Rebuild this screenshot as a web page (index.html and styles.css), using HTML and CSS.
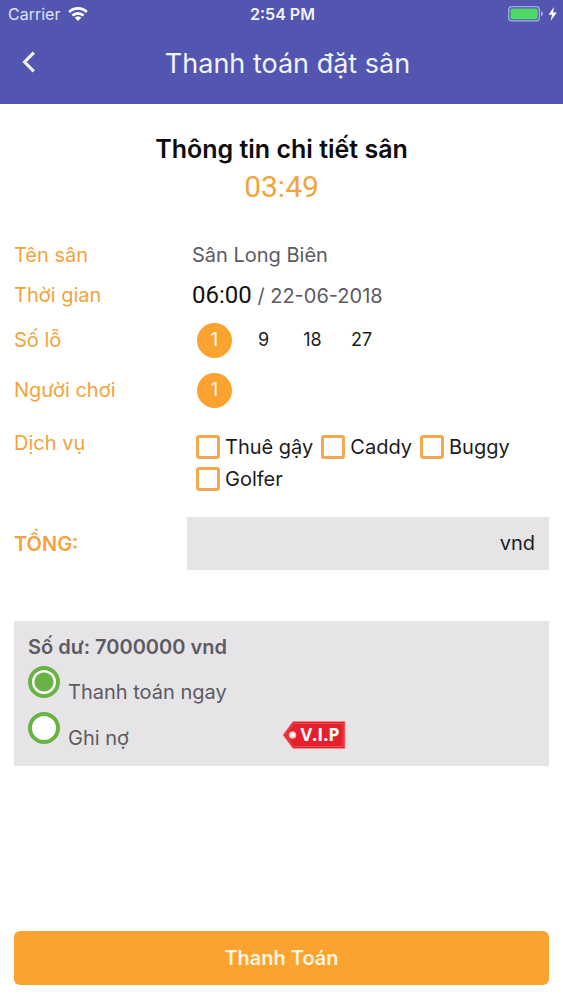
FILE: index.html
```html
<!DOCTYPE html>
<html lang="vi">
<head>
<meta charset="utf-8">
<meta name="viewport" content="width=device-width, initial-scale=1">
<title>Thanh toán đặt sân</title>
<link rel="stylesheet" href="styles.css">
</head>
<body>
<header class="topbar">
  <div class="status">
    <div class="status-left">
      <span>Carrier</span>
      <svg class="wifi" viewBox="0 0 20 14" aria-hidden="true">
        <g fill="none" stroke="currentColor" stroke-width="2.8">
          <path d="M1.2 5A12.6 12.6 0 0 1 18.8 5"/>
          <path d="M4.5 8.6A7.9 7.9 0 0 1 15.5 8.6"/>
        </g>
        <path d="M6.7 10.8A4.8 4.8 0 0 1 13.3 10.8L10 14Z" fill="currentColor"/>
      </svg>
    </div>
    <time class="status-time">2:54 PM</time>
    <div class="status-right">
      <svg class="battery" viewBox="0 0 36 16" aria-hidden="true">
        <rect x="0.7" y="0.7" width="30.6" height="14.2" rx="3" fill="none" stroke="#a9ace4" stroke-width="1.3"/>
        <rect x="2.4" y="2.4" width="27.2" height="10.8" rx="1.6" fill="#4cd964"/>
        <path d="M33 5.2Q35 6 35 7.8T33 10.4Z" fill="#a9ace4"/>
      </svg>
      <svg class="bolt" viewBox="0 0 9 14" aria-hidden="true">
        <path d="M5.8 0L0.6 7.8H4L2.6 14L8.8 5.6H5.2Z" fill="currentColor"/>
      </svg>
    </div>
  </div>
  <div class="nav">
    <button class="back" type="button" aria-label="Quay lại">
      <svg viewBox="0 0 14 22" aria-hidden="true"><path d="M11.8 1.6L2.6 11L11.8 20.4" fill="none" stroke="currentColor" stroke-width="3.2"/></svg>
    </button>
    <h1 class="nav-title">Thanh toán đặt sân</h1>
  </div>
</header>

<main class="content">
  <h2 class="heading">Thông tin chi tiết sân</h2>
  <time class="countdown">03:49</time>

  <dl class="details">
    <div class="row">
      <dt class="label">Tên sân</dt>
      <dd class="value">Sân Long Biên</dd>
    </div>
    <div class="row">
      <dt class="label">Thời gian</dt>
      <dd class="value"><time class="clock">06:00</time> / 22-06-2018</dd>
    </div>
    <div class="row row-choice">
      <dt class="label">Số lỗ</dt>
      <dd class="value choices">
        <button class="choice choice-on" type="button">1</button>
        <button class="choice" type="button">9</button>
        <button class="choice" type="button">18</button>
        <button class="choice" type="button">27</button>
      </dd>
    </div>
    <div class="row row-choice">
      <dt class="label">Người chơi</dt>
      <dd class="value choices">
        <button class="choice choice-on" type="button">1</button>
      </dd>
    </div>
    <div class="row row-services">
      <dt class="label">Dịch vụ</dt>
      <dd class="value services">
        <label class="service"><input class="check" type="checkbox">Thuê gậy</label>
        <label class="service"><input class="check" type="checkbox">Caddy</label>
        <label class="service"><input class="check" type="checkbox">Buggy</label>
        <label class="service"><input class="check" type="checkbox">Golfer</label>
      </dd>
    </div>
  </dl>

  <div class="total">
    <span class="label total-label">TỔNG:</span>
    <output class="total-box">vnd</output>
  </div>

  <section class="balance">
    <h3 class="balance-title">Số dư: 7000000 vnd</h3>
    <label class="pay"><input class="radio" type="radio" name="pay" checked><span class="pay-text">Thanh toán ngay</span></label>
    <div class="pay-line">
      <label class="pay"><input class="radio" type="radio" name="pay"><span class="pay-text">Ghi nợ</span></label>
      <svg class="vip" viewBox="0 0 64 30" role="img" aria-label="V.I.P">
        <path d="M1 15L11 1.5H63V28.5H11Z" fill="#e5202b" stroke="#f08a8f" stroke-width="1"/>
        <path d="M3.5 15L12 3.5H61V26.5H12Z" fill="none" stroke="#ee5960" stroke-width="0.8"/>
        <circle cx="10.5" cy="15" r="3.8" fill="#f8b5b6"/>
        <circle cx="10.5" cy="15" r="2.4" fill="#fff"/>
        <text class="vip-text" x="38" y="21" text-anchor="middle">V.I.P</text>
      </svg>
    </div>
  </section>

  <button class="submit" type="button">Thanh Toán</button>
</main>
</body>
</html>
```

FILE: styles.css
```css
* { box-sizing: border-box; }

body {
  margin: 0;
  min-height: 100vh;
  display: flex;
  flex-direction: column;
  background: #fff;
  color: #5c5b61;
  font-family: Inter, "Noto Sans", sans-serif;
  font-size: 20px;
  line-height: 24px;
}

h1, h2, h3, dl, dd { margin: 0; }
button, input { margin: 0; font: inherit; }
button { border: 0; padding: 0; background: none; color: inherit; }

.topbar {
  background: #5256b1;
  color: #f1f2ff;
}

.status {
  display: grid;
  grid-template-columns: 1fr auto 1fr;
  align-items: center;
  min-height: 28px;
  padding: 0 6px 0 8px;
  font-size: 16px;
}
.status-left { display: flex; align-items: center; gap: 8px; color: #dfe1fb; }
.wifi { width: 20px; height: 14px; color: #fff; }
.status-time { font-weight: 600; }
.status-right { display: flex; align-items: center; justify-content: flex-end; gap: 4px; color: #fff; }
.battery { width: 36px; height: 16px; }
.bolt { width: 9px; height: 14px; }

.nav {
  display: grid;
  grid-template-columns: 58px 1fr 46px;
  align-items: center;
  min-height: 76px;
  padding-bottom: 4px;
}
.back { justify-self: center; display: flex; padding: 0 0 4px; }
.back svg { width: 14px; height: 22px; }
.nav-title {
  text-align: center;
  font-size: 27px;
  font-weight: 400;
  line-height: 32px;
}

.content {
  flex: 1;
  display: flex;
  flex-direction: column;
  padding: 29px 14px 15px;
}
.heading {
  color: #0c0c0e;
  text-align: center;
  font-size: 25px;
  font-weight: 600;
  line-height: 32px;
}
.countdown {
  margin-top: 6px;
  text-align: center;
  color: #f3a33c;
  font-family: Roboto, sans-serif;
  font-size: 30px;
  font-weight: 400;
  line-height: 32px;
}

.details { margin-top: 32px; }
.row, .total {
  display: grid;
  grid-template-columns: 173px 1fr;
  align-items: center;
  min-height: 40px;
}
.label { color: #f3a33c; }
.value { padding-left: 5px; }
.clock {
  color: #111;
  font-family: Roboto, sans-serif;
  font-size: 24px;
}

.row-choice { min-height: 50px; }
.choices { display: flex; gap: 14px; padding-left: 10px; }
.choice {
  width: 35px;
  height: 35px;
  border-radius: 50%;
  color: #1c1c1e;
  font-size: 18px;
}
.choice-on { background: #faa330; color: #fff; }

.row-services { align-items: start; padding-top: 16px; }
.services {
  display: flex;
  flex-wrap: wrap;
  gap: 8px;
  padding: 4px 0 0 9px;
}
.service { display: flex; align-items: center; gap: 5px; color: #1c1c1e; }
.check {
  appearance: none;
  width: 24px;
  height: 24px;
  border: 3px solid #f1a94f;
  border-radius: 3px;
  background: #fff;
}

.total { margin-top: 26px; }
.total-label { font-weight: 600; }
.total-box {
  padding: 14px;
  background: #e6e4e7;
  color: #1c1c1e;
  text-align: right;
  line-height: 25px;
}

.balance {
  margin-top: 51px;
  padding: 14px 14px 16px;
  background: #e6e4e7;
}
.balance-title { margin-bottom: 7px; font-size: 20px; font-weight: 600; }
.pay { display: flex; gap: 8px; }
.pay-text { padding-top: 14px; }
.radio {
  appearance: none;
  flex: none;
  width: 32px;
  height: 32px;
  border: 4px solid #69b245;
  border-radius: 50%;
  background: #fff;
}
.radio:checked { background: radial-gradient(circle, #69b245 9px, #fff 10px); }
.pay-line {
  display: grid;
  grid-template-columns: 1fr 1fr;
  align-items: end;
  margin-top: 8px;
}
.vip { width: 64px; height: 30px; }
.vip-text {
  fill: #fff;
  font-family: "Open Sans", sans-serif;
  font-size: 18px;
  font-weight: 700;
}

.submit {
  margin-top: auto;
  min-height: 54px;
  border-radius: 6px;
  background: #faa330;
  color: #fff4df;
  font-weight: 600;
}
```
